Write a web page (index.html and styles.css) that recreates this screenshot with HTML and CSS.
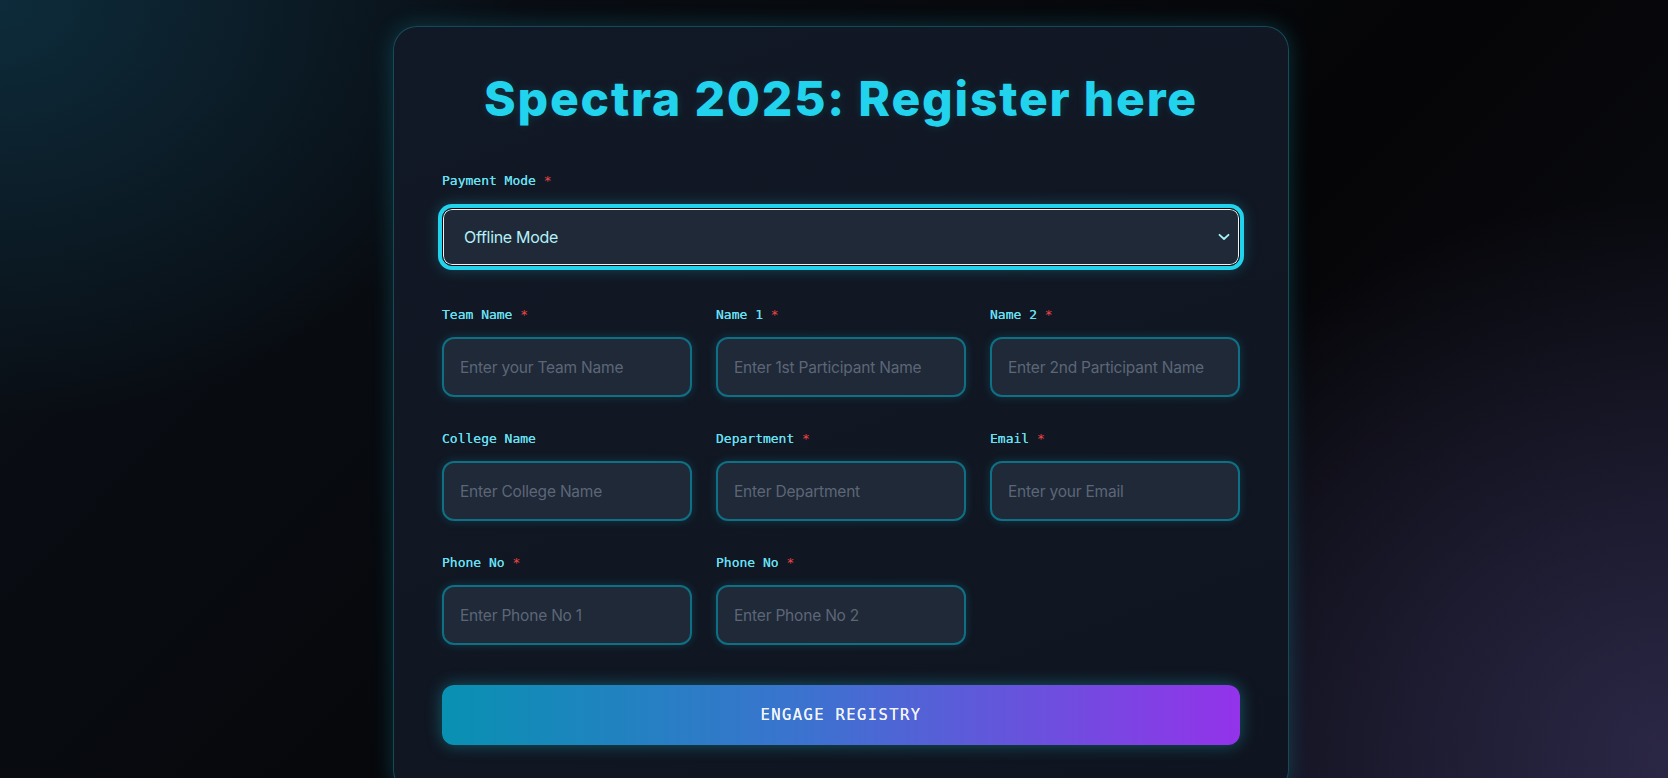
FILE: index.html
```html
<!DOCTYPE html>
<html lang="en">
<head>
<meta charset="utf-8">
<title>Spectra 2025: Register here</title>
<link rel="stylesheet" href="styles.css">
</head>
<body>
<main class="page">
  <form class="card">
    <h1 class="title">Spectra 2025: Register here</h1>

    <div class="field field-full">
      <label class="label">Payment Mode <span class="req">*</span></label>
      <div class="select">
        <span class="select-value">Offline Mode</span>
        <svg class="chevron" width="12" height="8" viewBox="0 0 12 8"><path d="M1.5 1.8 L6 6 L10.5 1.8" fill="none" stroke="#a5f3fc" stroke-width="1.8" stroke-linecap="round" stroke-linejoin="round"/></svg>
      </div>
    </div>

    <div class="grid">
      <div class="field">
        <label class="label">Team Name <span class="req">*</span></label>
        <input class="input" placeholder="Enter your Team Name">
      </div>
      <div class="field">
        <label class="label">Name 1 <span class="req">*</span></label>
        <input class="input" placeholder="Enter 1st Participant Name">
      </div>
      <div class="field">
        <label class="label">Name 2 <span class="req">*</span></label>
        <input class="input" placeholder="Enter 2nd Participant Name">
      </div>
      <div class="field">
        <label class="label">College Name</label>
        <input class="input" placeholder="Enter College Name">
      </div>
      <div class="field">
        <label class="label">Department <span class="req">*</span></label>
        <input class="input" placeholder="Enter Department">
      </div>
      <div class="field">
        <label class="label">Email <span class="req">*</span></label>
        <input class="input" placeholder="Enter your Email">
      </div>
      <div class="field">
        <label class="label">Phone No <span class="req">*</span></label>
        <input class="input" placeholder="Enter Phone No 1">
      </div>
      <div class="field">
        <label class="label">Phone No <span class="req">*</span></label>
        <input class="input" placeholder="Enter Phone No 2">
      </div>
    </div>

    <button type="button" class="submit">ENGAGE REGISTRY</button>
  </form>
</main>
</body>
</html>
```

FILE: styles.css
```css
html, body {
  margin: 0;
  padding: 0;
}

body {
  min-height: 100vh;
  overflow: hidden;
  background-color: #050608;
  background-image:
    radial-gradient(ellipse 520px 420px at 0% 0%, rgba(14, 52, 70, 0.75), rgba(14, 52, 70, 0) 100%),
    radial-gradient(ellipse 620px 560px at 100% 95%, rgba(44, 40, 72, 0.95), rgba(44, 40, 72, 0) 100%),
    linear-gradient(135deg, #0b1119 0%, #07090d 40%, #050507 60%, #0d0f18 100%);
  font-family: "Inter", "Noto Sans", sans-serif;
}

.page {
  display: flex;
  justify-content: center;
  padding: 26px 0 0 14px;
}

.card {
  width: 896px;
  box-sizing: border-box;
  padding: 48px;
  background: linear-gradient(160deg, #121926 0%, #0f1520 100%);
  border: 1px solid rgba(34, 211, 238, 0.28);
  border-radius: 24px;
  box-shadow: 0 0 22px rgba(34, 211, 238, 0.22);
  display: flex;
  flex-direction: column;
}

.title {
  margin: 0 0 48px;
  font-family: "Inter", sans-serif;
  font-weight: 800;
  font-size: 48px;
  line-height: 48px;
  letter-spacing: 1.8px;
  color: #22d3ee;
  text-align: center;
  text-shadow: 0 0 10px rgba(34, 211, 238, 0.15);
}

.field {
  display: flex;
  flex-direction: column;
}

.label {
  display: block;
  font-family: "DejaVu Sans Mono", "Liberation Mono", monospace;
  font-weight: 400;
  font-size: 13px;
  line-height: 20px;
  color: #67e0f3;
  text-shadow: 0 0 0.6px #67e0f3;
  margin-bottom: 12px;
}

.field-full .label {
  margin-bottom: 17px;
}

.req {
  color: #ef4444;
  text-shadow: none;
}

.select {
  height: 58px;
  box-sizing: border-box;
  border: 1px solid #05070a;
  border-radius: 10px;
  background: #1f2937;
  box-shadow: inset 0 0 0 1px #e8f6fa, 0 0 0 4px #22d3ee, 0 0 14px 4px rgba(34, 211, 238, 0.25);
  display: flex;
  align-items: center;
  justify-content: space-between;
  padding: 0 9px 0 21px;
  margin-bottom: 39px;
}

.select-value {
  font-family: "Inter", sans-serif;
  font-size: 16px;
  color: #b5f0f8;
  letter-spacing: -0.3px;
}

.chevron {
  display: block;
}

.grid {
  display: grid;
  grid-template-columns: repeat(3, 1fr);
  column-gap: 24px;
  row-gap: 32px;
}

.input {
  height: 60px;
  box-sizing: border-box;
  width: 100%;
  padding: 0 16px;
  border: 2px solid #0e6f85;
  border-radius: 12px;
  background: #1f2937;
  box-shadow: 0 0 10px rgba(34, 211, 238, 0.18);
  font-family: "Inter", sans-serif;
  font-size: 15.5px;
  color: #e5e7eb;
  outline: none;
}

.input::placeholder {
  color: #5d6677;
  letter-spacing: -0.2px;
}

.submit {
  margin-top: 40px;
  height: 60px;
  border: none;
  border-radius: 12px;
  background: linear-gradient(90deg, #0891b2 0%, #3b73cf 45%, #9333ea 100%);
  box-shadow: 0 0 16px rgba(34, 211, 238, 0.35);
  font-family: "DejaVu Sans Mono", "Liberation Mono", monospace;
  font-weight: 400;
  font-size: 15.5px;
  letter-spacing: 1.4px;
  color: #f1f5f9;
  text-shadow: 0 0 0.6px #f1f5f9;
  cursor: pointer;
}
```
